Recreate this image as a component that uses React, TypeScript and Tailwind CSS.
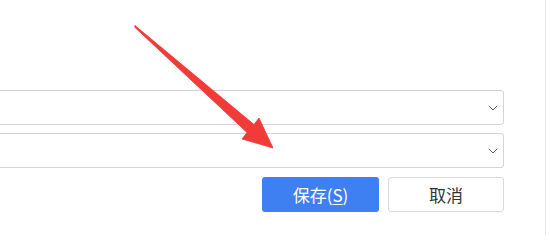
import { ChevronDown } from "lucide-react";

function SelectBox() {
  return (
    <div className="-ml-2 flex h-[35px] items-center justify-end rounded-[3px] border border-[#d4d4d4] bg-white pr-[2px]">
      <ChevronDown className="h-[16px] w-[16px] text-[#666]" strokeWidth={1.5} />
    </div>
  );
}

export default function App() {
  return (
    <div className="relative h-[235px] w-[550px] overflow-hidden bg-white font-['Noto_Sans_CJK_SC','Liberation_Sans',sans-serif]">
      <div className="h-full w-[546px] border-r border-[#e6e6e6] pr-[41px] pt-[90px]">
        {/* Form fields */}
        <div className="flex flex-col gap-[8px]">
          <SelectBox />
          <SelectBox />
        </div>

        {/* Actions */}
        <div className="mt-[9px] flex justify-end gap-[9px]">
          <button className="flex h-[35px] w-[117px] items-center justify-center rounded-[3px] bg-[#3e80f2] text-[17px] text-white">
            保存(<span className="underline underline-offset-2">S</span>)
          </button>
          <button className="flex h-[35px] w-[116px] items-center justify-center rounded-[3px] border border-[#d9d9d9] bg-white text-[17px] text-[#333]">
            取消
          </button>
        </div>
      </div>

      {/* Annotation arrow */}
      <svg className="pointer-events-none absolute left-0 top-0" width="550" height="235" viewBox="0 0 550 235">
        <polygon
          points="135,25.5 254,124.5 259,118 273,148 242,139 247,132.5 134.5,27"
          fill="#f03b39"
          stroke="#f03b39"
          strokeWidth="0.8"
          strokeLinejoin="round"
        />
      </svg>
    </div>
  );
}
